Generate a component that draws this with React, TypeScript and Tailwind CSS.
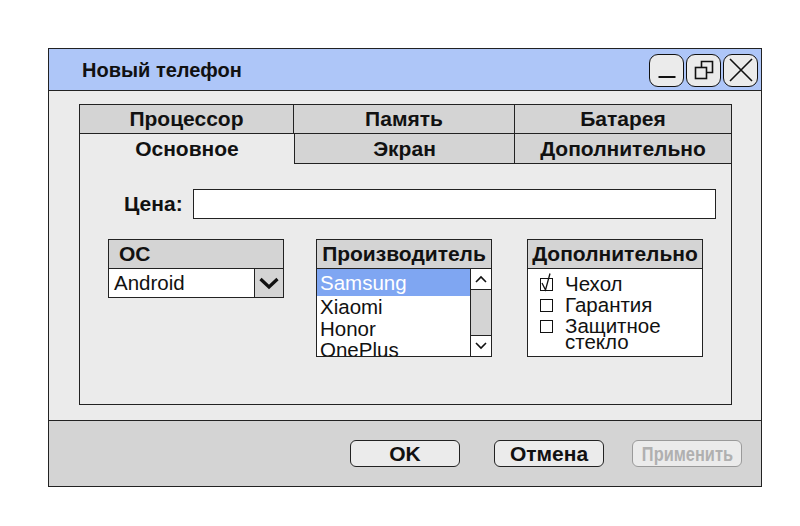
import React from "react";

const font = { fontFamily: '"Liberation Sans", Arial, sans-serif' };

function TitleButton({ children }: { children: React.ReactNode }) {
  return (
    <div className="w-[35px] h-[33px] rounded-[9px] border-[1.5px] border-[#111] bg-[#ebebeb] flex items-center justify-center">
      {children}
    </div>
  );
}

function FooterButton({ label, disabled }: { label: string; disabled?: boolean }) {
  return (
    <div
      className={
        "w-[110px] h-[27px] rounded-[6px] border flex items-center justify-center text-[21px] font-bold whitespace-nowrap " +
        (disabled ? "border-[#9a9a9a] text-[#b0b0b0] bg-[#ebebeb]" : "border-[#222] text-[#111] bg-[#ebebeb]")
      }
    >
      {disabled ? <span className="inline-block scale-x-[0.78]">{label}</span> : label}
    </div>
  );
}

function CheckRow({ checked, children }: { checked?: boolean; children: React.ReactNode }) {
  return (
    <div className="flex items-start gap-[11px]">
      <svg width="14" height="16" viewBox="0 0 14 16" className="shrink-0 overflow-visible">
        <rect x="0.5" y="2.5" width="12" height="12" fill="white" stroke="#111" strokeWidth="1" />
        {checked && <path d="M2 7 L5.5 14 L10 -2.5" fill="none" stroke="#111" strokeWidth="1.3" />}
      </svg>
      <div className="text-[20.5px] leading-[16px] text-[#111]">{children}</div>
    </div>
  );
}

export default function App() {
  return (
    <div className="w-[800px] h-[526px] bg-white pt-[48px] pl-[48px]" style={font}>
      <div className="w-[714px] h-[439px] border border-[#222] bg-[#ebebeb] flex flex-col">
        {/* Title bar */}
        <div className="h-[42px] shrink-0 border-b border-[#222] bg-[#aec6f8] flex items-center pl-[33px] pr-[3px]">
          <span className="text-[20px] font-bold text-[#111]">Новый телефон</span>
          <div className="ml-auto flex gap-[2px] pt-[1px]">
            <TitleButton>
              <svg width="22" height="22" viewBox="0 0 22 22">
                <path d="M2.5 18 H19.5" stroke="#111" strokeWidth="2" />
              </svg>
            </TitleButton>
            <TitleButton>
              <svg width="22" height="22" viewBox="0 0 22 22">
                <path d="M8.5 8.5 V2.5 H19.5 V13.5 H13.5" fill="none" stroke="#111" strokeWidth="1.6" />
                <rect x="2.5" y="8.5" width="11" height="11" fill="none" stroke="#111" strokeWidth="1.6" />
              </svg>
            </TitleButton>
            <TitleButton>
              <svg width="26" height="26" viewBox="0 0 26 26">
                <path d="M2 2 L24 24 M24 2 L2 24" stroke="#111" strokeWidth="1.6" />
              </svg>
            </TitleButton>
          </div>
        </div>

        {/* Body */}
        <div className="flex-1 pl-[30px] pt-[13px]">
          <div className="w-[653px] h-[301px] border border-[#222] flex flex-col">
            {/* Tabs */}
            <div className="grid grid-cols-[214px_221px_1fr] text-[21px] font-bold text-[#111]">
              <div className="h-[29px] bg-[#d4d4d4] border-b border-r border-[#222] flex items-center justify-center">Процессор</div>
              <div className="h-[29px] bg-[#d4d4d4] border-b border-r border-[#222] flex items-center justify-center">Память</div>
              <div className="h-[29px] bg-[#d4d4d4] border-b border-[#222] flex items-center justify-center">Батарея</div>
              <div className="h-[30px] flex items-center justify-center">Основное</div>
              <div className="h-[30px] bg-[#d4d4d4] border-b border-l border-r border-[#222] flex items-center justify-center">Экран</div>
              <div className="h-[30px] bg-[#d4d4d4] border-b border-[#222] flex items-center justify-center">Дополнительно</div>
            </div>

            {/* Price */}
            <div className="flex items-center h-[30px] mt-[25px] pl-[44px] pr-[15px]">
              <span className="text-[21px] font-bold text-[#111] w-[69px]">Цена:</span>
              <div className="flex-1 h-[30px] border border-[#222] bg-white" />
            </div>

            {/* Groups */}
            <div className="flex items-start mt-[20px] pl-[28px]">
              {/* OS */}
              <div className="w-[176px] border border-[#222]">
                <div className="h-[29px] bg-[#d4d4d4] border-b border-[#222] pl-[10px] flex items-center text-[21px] font-bold text-[#111]">ОС</div>
                <div className="h-[28px] bg-white flex">
                  <div className="flex-1 pl-[5px] flex items-center text-[20.5px] text-[#111]">Android</div>
                  <div className="w-[29px] border-l border-[#222] bg-[#d4d4d4] flex items-center justify-center">
                    <svg width="22" height="14" viewBox="0 0 22 14">
                      <path d="M2.5 3 L11 11 L19.5 3" fill="none" stroke="#111" strokeWidth="3.2" />
                    </svg>
                  </div>
                </div>
              </div>

              {/* Manufacturer */}
              <div className="w-[176px] ml-[32px] border border-[#222]">
                <div className="h-[29px] bg-[#d4d4d4] border-b border-[#222] flex items-center justify-center text-[21px] font-bold text-[#111] whitespace-nowrap">Производитель</div>
                <div className="h-[87px] bg-white flex">
                  <div className="flex-1 overflow-hidden text-[20.5px] leading-[21.5px] text-[#111]">
                    <div className="bg-[#7fa6f2] text-white pl-[3px] h-[27px] leading-[27px]">Samsung</div>
                    <div className="pl-[3px]">Xiaomi</div>
                    <div className="pl-[3px]">Honor</div>
                    <div className="pl-[3px]">OnePlus</div>
                  </div>
                  <div className="w-[21px] border-l border-[#222] flex flex-col bg-[#d4d4d4]">
                    <div className="h-[21px] bg-white border-b border-[#222] flex items-center justify-center">
                      <svg width="14" height="10" viewBox="0 0 14 10">
                        <path d="M2 8 L7 3 L12 8" fill="none" stroke="#111" strokeWidth="1.6" />
                      </svg>
                    </div>
                    <div className="flex-1" />
                    <div className="h-[21px] bg-white border-t border-[#222] flex items-center justify-center">
                      <svg width="14" height="10" viewBox="0 0 14 10">
                        <path d="M2 2 L7 7 L12 2" fill="none" stroke="#111" strokeWidth="1.6" />
                      </svg>
                    </div>
                  </div>
                </div>
              </div>

              {/* Extra */}
              <div className="w-[176px] ml-[35px] border border-[#222]">
                <div className="h-[29px] bg-[#d4d4d4] border-b border-[#222] flex items-center justify-center text-[21px] font-bold text-[#111] whitespace-nowrap">Дополнительно</div>
                <div className="h-[87px] bg-white pl-[12px] pt-[7px] flex flex-col gap-[5px]">
                  <CheckRow checked>Чехол</CheckRow>
                  <CheckRow>Гарантия</CheckRow>
                  <CheckRow>
                    Защитное
                    <br />
                    стекло
                  </CheckRow>
                </div>
              </div>
            </div>
          </div>
        </div>

        {/* Footer */}
        <div className="h-[66px] shrink-0 border-t border-[#222] bg-[#d4d4d4] flex items-center pl-[301px]">
          <FooterButton label="OK" />
          <div className="ml-[34px]">
            <FooterButton label="Отмена" />
          </div>
          <div className="ml-[28px]">
            <FooterButton label="Применить" disabled />
          </div>
        </div>
      </div>
    </div>
  );
}
